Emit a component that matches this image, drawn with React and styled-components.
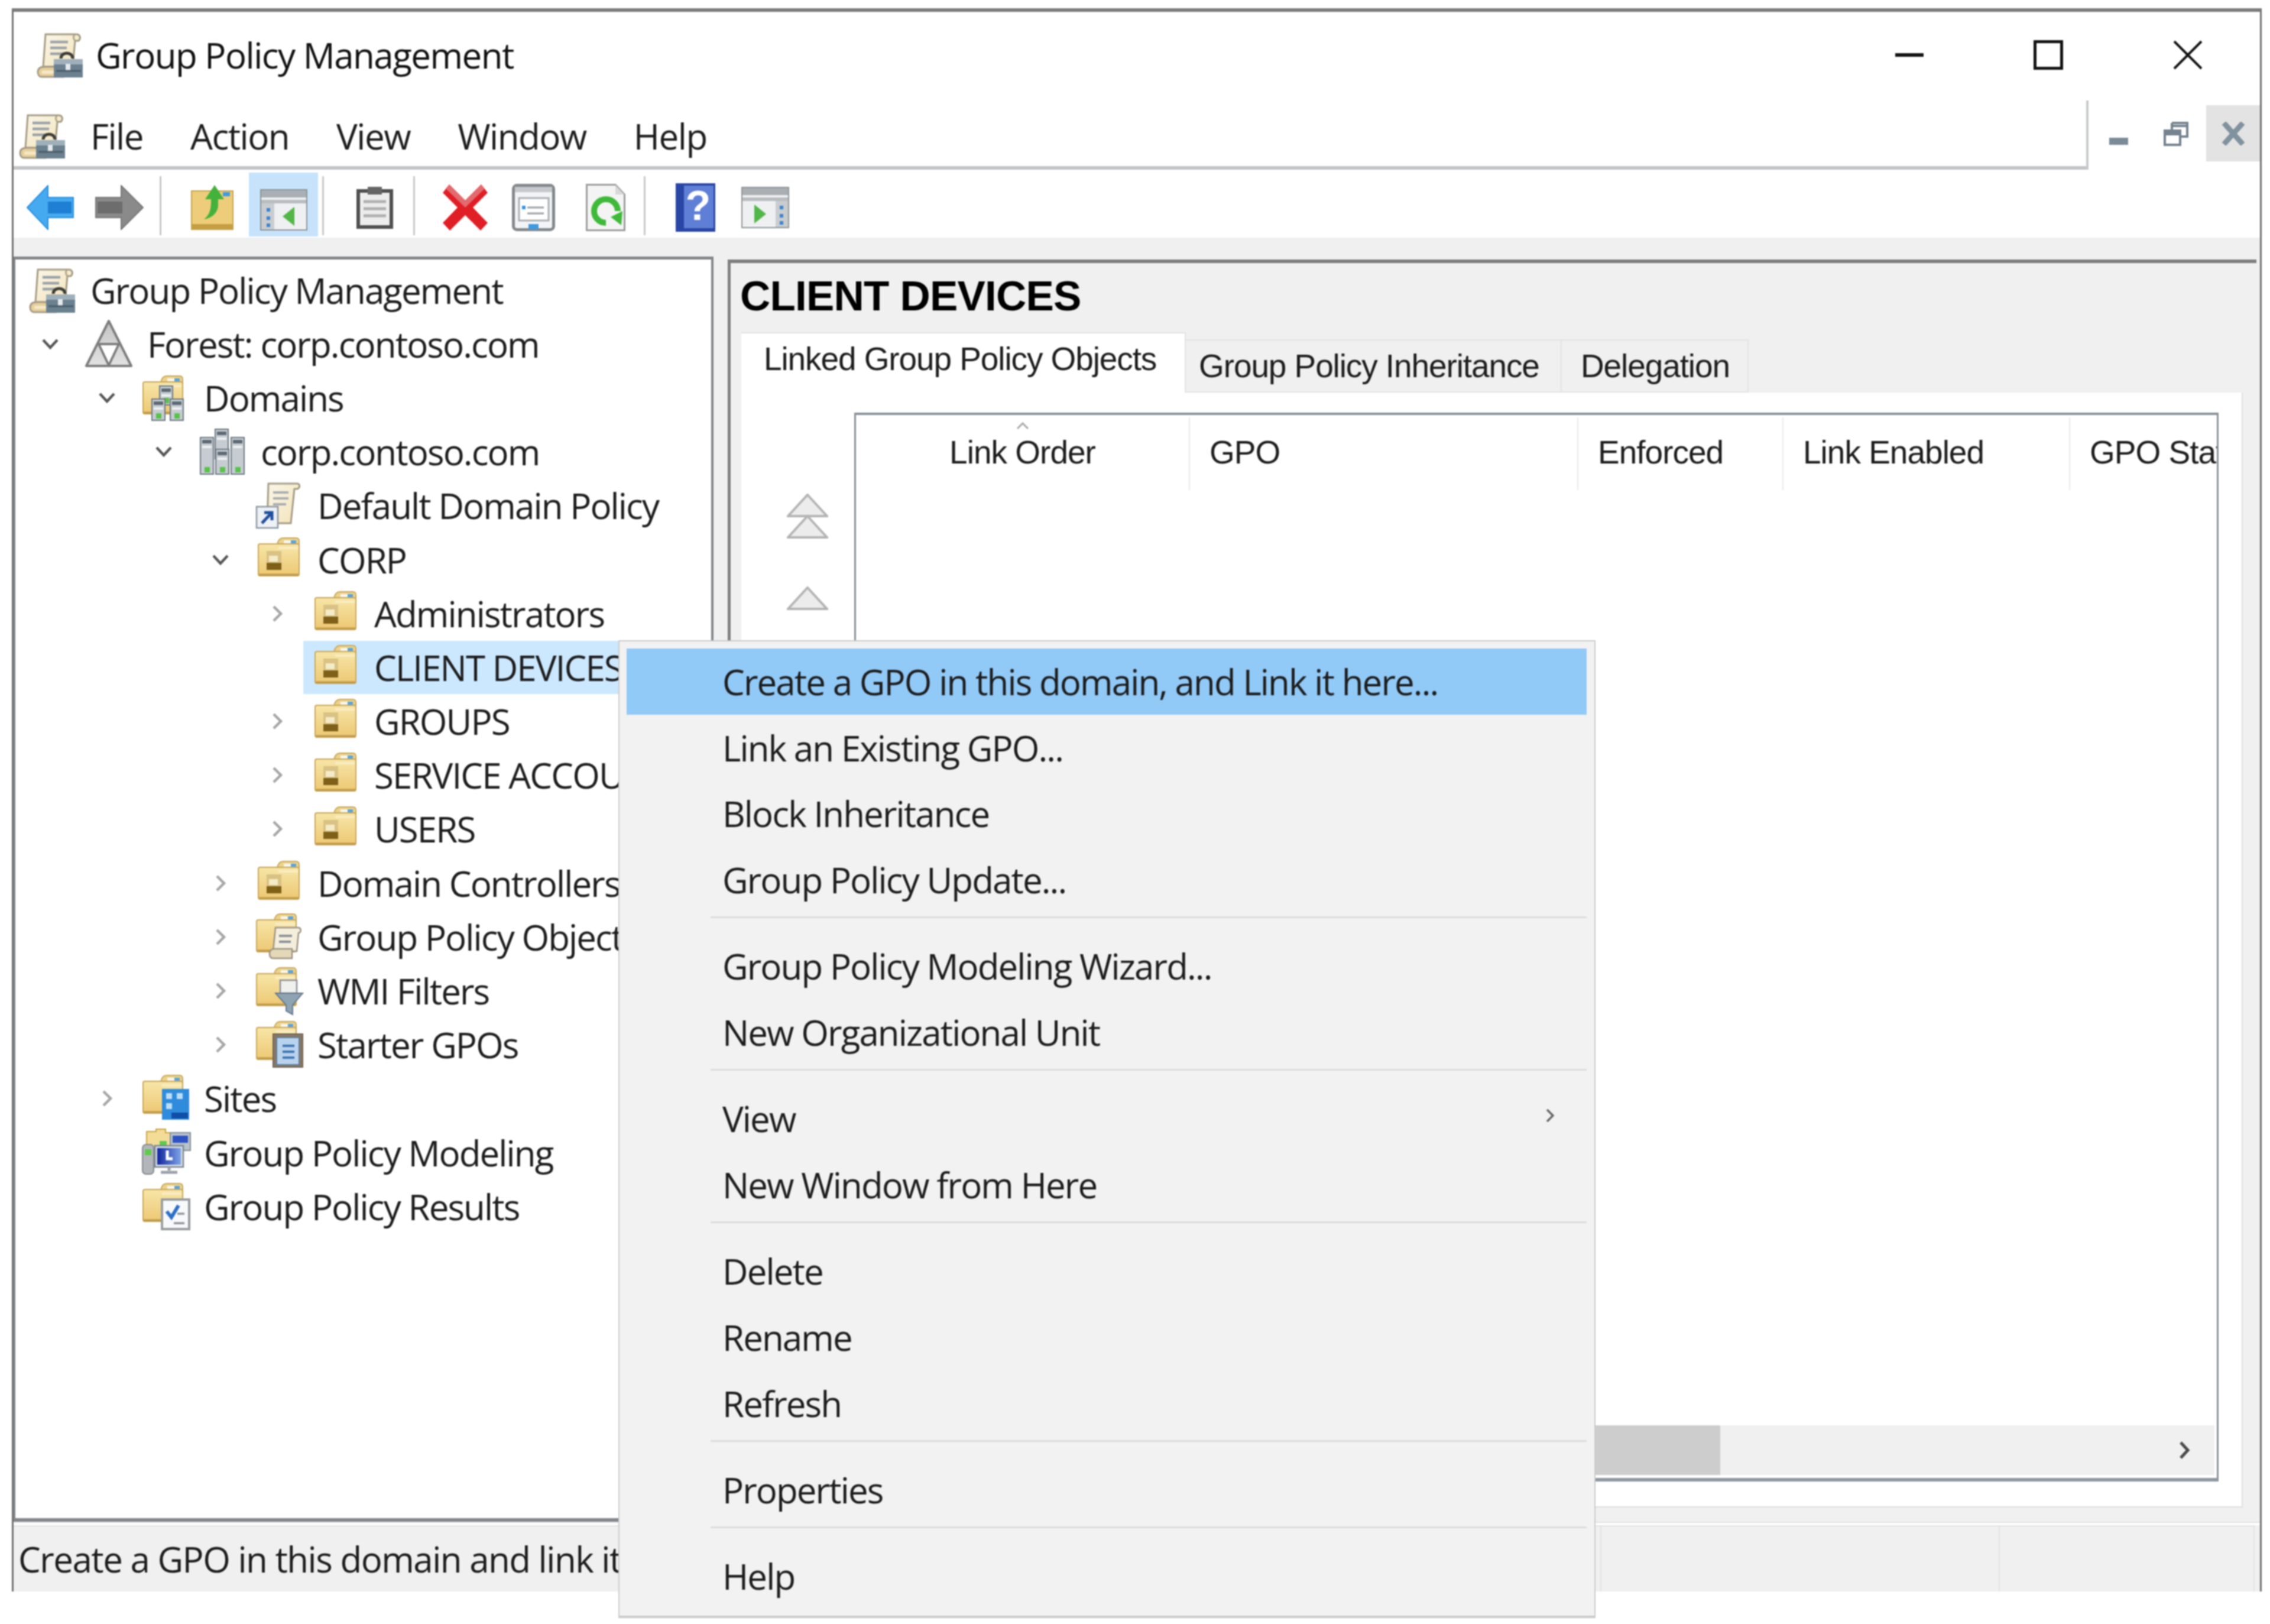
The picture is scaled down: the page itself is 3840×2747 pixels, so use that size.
import React from "react";
import styled, { createGlobalStyle } from "styled-components";

const GlobalStyle = createGlobalStyle`
  html, body {
    margin: 0;
    padding: 0;
    background: #fff;
  }
`;

const UI_FONT = `"Open Sans", "Noto Sans", sans-serif`;
const HEADER_FONT = `"Liberation Sans", Arial, sans-serif`;

const Page = styled.div`
  position: relative;
  width: 3840px;
  height: 2747px;
  overflow: hidden;
  background: #fff;
  padding: 14px 14px 0 20px;
  box-sizing: border-box;
  font-family: ${UI_FONT};
  color: #1c1c1c;
  filter: blur(0.9px);
`;

const SharedDefs = styled.svg`
  position: absolute;
  width: 0;
  height: 0;
`;

const Window = styled.div`
  width: 3806px;
  height: 2678px;
  box-sizing: border-box;
  border-top: 6px solid #7c7c7c;
  border-left: 3px solid #6f6f6f;
  border-right: 3px solid #6f6f6f;
  display: flex;
  flex-direction: column;
  background: #fff;
`;

const TitleBar = styled.div`
  height: 146px;
  flex: none;
  display: flex;
  align-items: center;
  padding-left: 38px;
`;

const TitleText = styled.div`
  margin-left: 21px;
  font-size: 60px;
  letter-spacing: -1.5px;
  white-space: nowrap;
  color: #111;
`;

const Caption = styled.div`
  margin-left: auto;
  display: flex;
  align-items: center;
  padding-right: 97px;
  gap: 186px;
`;

const MenuBar = styled.div`
  height: 121px;
  flex: none;
  box-sizing: border-box;
  display: flex;
  align-items: center;
  padding-left: 8px;
  padding-top: 13px;
  border-bottom: 6px solid #c2c4c6;
`;

const MenuItems = styled.div`
  display: flex;
  gap: 80px;
  margin-left: 42px;
  font-size: 60px;
  letter-spacing: -1.5px;
`;

const MdiGroup = styled.div`
  margin-left: auto;
  align-self: stretch;
  margin-top: -9px;
  margin-bottom: -6px;
  padding: 8px 0 14px 5px;
  border-left: 4px solid #c6c8ca;
  display: flex;
  gap: 6px;
  background: #fff;
`;

const MdiButton = styled.div`
  width: 91px;
  display: flex;
  align-items: center;
  justify-content: center;
  background: ${(p) => (p.$active ? "#e3e3e3" : "#fff")};
`;

const ToolBar = styled.div`
  height: 115px;
  flex: none;
  box-sizing: border-box;
  display: flex;
  align-items: center;
  padding-left: 22px;
  padding-top: 12px;
  background: #fff;
`;

const ToolIcon = styled.svg`
  flex: none;
  margin-left: ${(p) => p.$ml || 0}px;
`;

const ToolSep = styled.div`
  flex: none;
  width: 3px;
  height: 100px;
  margin-top: -6px;
  margin-left: ${(p) => p.$ml}px;
  background: #c9c9c9;
`;

const ToolToggle = styled.div`
  flex: none;
  align-self: flex-start;
  box-sizing: border-box;
  width: 117px;
  height: 108px;
  margin-top: -7px;
  margin-left: ${(p) => p.$ml}px;
  padding-top: 28px;
  background: #c6e3fb;
  display: flex;
  align-items: flex-start;
  justify-content: center;
`;

const Workspace = styled.div`
  flex: 1;
  min-height: 0;
  display: flex;
  gap: 24px;
  padding-top: 32px;
  background: #f0f0f0;
  padding-right: 6px;
  border-bottom: 2px solid #e2e2e2;
`;

const TreePane = styled.div`
  width: 1184px;
  flex: none;
  box-sizing: border-box;
  border-top: 5px solid #83878c;
  border-left: 3px solid #83878c;
  border-right: 4px solid #83878c;
  border-bottom: 6px solid #83878c;
  background: #fff;
  padding-top: 6px;
  overflow: hidden;
`;

const TreeRow = styled.div`
  height: 91.2px;
  display: flex;
  align-items: center;
  padding-left: ${(p) => (p.$level === 0 ? 22 : 22 + 96 * (p.$level - 1))}px;
  white-space: nowrap;
`;

const TreeChevron = styled.div`
  width: 96px;
  flex: none;
  box-sizing: border-box;
  padding-left: 22px;
  display: flex;
  align-items: center;
`;

const TreeNode = styled.div`
  flex: 1;
  display: flex;
  align-items: center;
  height: 90px;
  margin-left: -15px;
  padding-left: 15px;
  background: ${(p) => (p.$selected ? "#cce8ff" : "transparent")};
`;

const TreeIcon = styled.div`
  width: 105px;
  flex: none;
  display: flex;
  align-items: center;
`;

const TreeText = styled.span`
  font-size: 60px;
  letter-spacing: -1.9px;
`;

const DetailPane = styled.div`
  flex: 1;
  min-width: 0;
  box-sizing: border-box;
  margin-top: 5px;
  border-top: 6px solid #7f7f7f;
  border-left: 5px solid #7f7f7f;
  display: flex;
  flex-direction: column;
  padding-left: 18px;
  padding-right: 23px;
  padding-bottom: 24px;
`;

const PaneTitle = styled.div`
  height: 117px;
  flex: none;
  box-sizing: border-box;
  padding-bottom: 6px;
  margin-left: -2px;
  font-family: ${HEADER_FONT};
  font-weight: 700;
  font-size: 71px;
  letter-spacing: -0.8px;
  color: #000;
  display: flex;
  align-items: center;
`;

const TabRow = styled.div`
  display: flex;
  align-items: flex-end;
  flex: none;
  font-family: ${HEADER_FONT};
  font-size: 55px;
  height: 102px;
`;

const Tab = styled.div`
  box-sizing: border-box;
  width: ${(p) => p.$w}px;
  height: ${(p) => (p.$active ? 102 : 90)}px;
  display: flex;
  align-items: center;
  padding-left: ${(p) => p.$pad}px;
  padding-bottom: ${(p) => (p.$active ? 14 : 0)}px;
  background: ${(p) => (p.$active ? "#fff" : "#f0f0f0")};
  border-top: 2px solid #e2e2e2;
  border-right: 2px solid #e2e2e2;
  border-bottom: ${(p) => (p.$active ? "none" : "2px solid #e2e2e2")};
  white-space: nowrap;
  letter-spacing: -1.1px;
`;

const TabPanel = styled.div`
  flex: 1;
  min-height: 0;
  display: flex;
  background: #fff;
  border-right: 2px solid #dedede;
  border-bottom: 2px solid #dedede;
  padding: 34px 39px 42px 0;
`;

const MoveColumn = styled.div`
  width: 191px;
  flex: none;
  box-sizing: border-box;
  padding-top: 137px;
  padding-left: 77px;
  display: flex;
  flex-direction: column;
  gap: 81px;
`;

const ListBox = styled.div`
  flex: 1;
  min-width: 0;
  position: relative;
  box-sizing: border-box;
  border-top: 4px solid #8b929b;
  border-left: 3px solid #8b929b;
  border-right: 3px solid #8b929b;
  border-bottom: 6px solid #9098a1;
  display: flex;
  flex-direction: column;
  overflow: hidden;
`;

const HeaderRow = styled.div`
  display: flex;
  flex: none;
  margin-top: 4px;
  height: 123px;
  font-family: ${HEADER_FONT};
  font-size: 55px;
  letter-spacing: -1px;
`;

const HeaderCell = styled.div`
  box-sizing: border-box;
  flex: ${(p) => (p.$w ? `0 0 ${p.$w}px` : "1")};
  min-width: 0;
  overflow: hidden;
  white-space: nowrap;
  display: flex;
  align-items: center;
  justify-content: ${(p) => (p.$center ? "center" : "flex-start")};
  padding-left: ${(p) => (p.$center ? 0 : 33)}px;
  padding-bottom: 6px;
  border-right: ${(p) => (p.$w ? "2px solid #e8e8e8" : "none")};
`;

const SortCaret = styled.svg`
  position: absolute;
  left: 270px;
  top: 10px;
`;

const ListBody = styled.div`
  flex: 1;
`;

const ScrollBar = styled.div`
  height: 84px;
  flex: none;
  margin-bottom: 5px;
  margin-right: 4px;
  background: #f0f0f0;
  display: flex;
  align-items: center;
  padding-left: 952px;
  padding-right: 37px;
`;

const ScrollThumb = styled.div`
  width: 510px;
  height: 84px;
  background: #cdcdcd;
`;

const ScrollArrow = styled.svg`
  margin-left: auto;
`;

const StatusBar = styled.div`
  height: 116px;
  flex: none;
  display: flex;
  background: #f0f0f0;
  border-top: 4px solid #fff;
  box-sizing: border-box;
`;

const StatusCell = styled.div`
  width: ${(p) => p.$w}px;
  flex: none;
  box-sizing: border-box;
  padding-left: 8px;
  display: flex;
  align-items: center;
  white-space: nowrap;
  overflow: hidden;
  font-size: 60px;
  letter-spacing: -1.5px;
  border-right: 2px solid #e2e2e2;
  border-top: 2px solid #e2e2e2;
`;

const ContextMenu = styled.div`
  position: absolute;
  left: 1046px;
  top: 1083px;
  width: 1653px;
  height: 1654px;
  box-sizing: border-box;
  padding: 12px 13px 12px 12px;
  background: #f2f2f2;
  border: 2px solid #cacaca;
  border-bottom-width: 4px;
  display: flex;
  flex-direction: column;
`;

const ContextItem = styled.div`
  height: 111.8px;
  flex: none;
  box-sizing: border-box;
  padding-left: 162px;
  padding-right: 52px;
  display: flex;
  align-items: center;
  justify-content: space-between;
  font-size: 60px;
  letter-spacing: -1.9px;
  white-space: nowrap;
  background: ${(p) => (p.$active ? "#91c9f7" : "transparent")};
`;

const ContextArrow = styled.svg`
  margin-bottom: 10px;
`;

const ContextSep = styled.div`
  height: 34.4px;
  flex: none;
  box-sizing: border-box;
  margin-left: 142px;
  padding-top: 6px;
  &::before {
    content: "";
    display: block;
    height: 3px;
    background: #dcdcdc;
  }
`;

// ---- icons ----

const Paper = () => (
  <>
    <path d="M16 5H68C75 5 76 12 72 16H66L62 60H12Z" fill="url(#paperFill)" stroke="#a59c86" strokeWidth="3" />
    <path d="M66 16C62 12 62 8 66 5" fill="#e0cfa3" stroke="#a59c86" strokeWidth="2" />
    <path d="M24 18H54M24 28H52M24 38H48" stroke="#9ba3aa" strokeWidth="4.5" />
    <path d="M3 69C3 62 8 60 14 60H46V77H10C6 77 3 74 3 69Z" fill="#e8d09c" stroke="#a59c86" strokeWidth="3" />
    <path d="M10 69H34" stroke="#f6e9c9" strokeWidth="5" />
  </>
);

const Toolbox = () => (
  <>
    <path d="M42 46C42 34 62 34 62 46" fill="none" stroke="#3e3e38" strokeWidth="5" />
    <rect x="30" y="47" width="49" height="31" fill="#6b818f" />
    <rect x="30" y="47" width="49" height="9" fill="#9fb0bb" />
    <rect x="50" y="55" width="8" height="12" fill="#e6eaec" />
    <path d="M34 67H76" stroke="#4a5c68" strokeWidth="3" />
  </>
);

const GpmIcon = () => (
  <svg width="80" height="80" viewBox="0 0 80 80">
    <Paper />
    <Toolbox />
  </svg>
);

const ForestIcon = () => (
  <svg width="80" height="84" viewBox="0 0 80 84">
    <path d="M40 3L78 79H2Z" fill="url(#forestFill)" stroke="#7d7d7d" strokeWidth="4" strokeLinejoin="round" />
    <path d="M23 42H57L40 78Z" fill="#fff" stroke="#7d7d7d" strokeWidth="4" strokeLinejoin="round" />
  </svg>
);

const FolderBody = ({ w = 70 }) => (
  <>
    <path d={`M${w - 38} 14Q${w - 36} 3 ${w - 28} 3H${w - 6}Q${w - 1} 3 ${w - 1} 9V22H${w - 38}Z`} fill="#ecd28b" stroke="#c8a95c" strokeWidth="2" />
    <rect x={w - 27} y="7" width="12" height="5" fill="#f8f7ee" />
    <rect x={w - 15} y="7" width="9" height="5" fill="#55a4e2" />
    <rect x="2" y="13" width={w - 3} height="54" rx="3" fill="url(#folderFill)" stroke="#c8a65a" strokeWidth="2" />
    <path d={`M${w - 36} 20H${w - 3}`} stroke="#f9ecbf" strokeWidth="4" />
    <path d={`M3 65H${w - 2}`} stroke="#c09a48" strokeWidth="3" />
  </>
);

const OuIcon = () => (
  <svg width="80" height="80" viewBox="0 0 80 80">
    <g transform="translate(3 0)">
      <FolderBody w={72} />
      <rect x="16" y="25" width="25" height="32" fill="#d9c284" />
      <rect x="20" y="33" width="15" height="10" fill="#f4ecc8" />
      <rect x="16" y="45" width="25" height="12" fill="#7f6018" />
    </g>
  </svg>
);

const Server = ({ x, y, h = 42 }) => (
  <g transform={`translate(${x} ${y})`}>
    <rect width="22" height={h} fill="#c6ccd1" stroke="#6d7882" strokeWidth="2" />
    <rect x="3" y="4" width="16" height="6" fill="#5d6a75" />
    <rect x="3" y="14" width="16" height="4" fill="#eef0f2" />
    <rect x="7" y={h - 12} width="9" height="9" fill="#58c24a" />
  </g>
);

const ServersIcon = () => (
  <svg width="80" height="80" viewBox="0 0 80 80">
    <Server x="28" y="2" h="50" />
    <Server x="3" y="16" h="62" />
    <Server x="55" y="16" h="62" />
    <Server x="29" y="36" h="42" />
  </svg>
);

const DomainsIcon = () => (
  <svg width="84" height="80" viewBox="0 0 84 80">
    <FolderBody w={70} />
    <Server x="30" y="20" h="32" />
    <Server x="17" y="42" h="36" />
    <Server x="48" y="42" h="36" />
  </svg>
);

const LinkIcon = () => (
  <svg width="80" height="80" viewBox="0 0 80 80">
    <path d="M22 3H70C76 3 76 10 71 12H66L60 70H20Z" fill="url(#paperFill)" stroke="#a59c86" strokeWidth="3" />
    <path d="M30 18H56M30 28H56M30 38H52" stroke="#a9aeb3" strokeWidth="4" />
    <rect x="2" y="42" width="36" height="36" fill="#eef1f5" stroke="#8d97a2" strokeWidth="2.5" />
    <path d="M11 70L26 54M15 52H28V65" fill="none" stroke="#1f4f9c" strokeWidth="5" />
  </svg>
);

const GpoFolderIcon = () => (
  <svg width="84" height="84" viewBox="0 0 84 84">
    <FolderBody w={70} />
    <path d="M34 26H72C78 26 78 34 73 35L70 66H30Z" fill="#f4eedd" stroke="#9c9482" strokeWidth="2.5" />
    <path d="M40 40H62M40 50H60" stroke="#8b9298" strokeWidth="4" />
    <path d="M24 70C24 64 28 62 32 62H62V78H30C26 78 24 75 24 70Z" fill="#e5d8b8" stroke="#9c9482" strokeWidth="2.5" />
  </svg>
);

const WmiIcon = () => (
  <svg width="84" height="84" viewBox="0 0 84 84">
    <FolderBody w={70} />
    <rect x="42" y="24" width="28" height="22" fill="#f0f0ee" stroke="#8e9499" strokeWidth="2.5" />
    <path d="M34 46H80L63 66V82L52 76V66Z" fill="#8fa4b3" stroke="#66798a" strokeWidth="2" />
  </svg>
);

const StarterIcon = () => (
  <svg width="84" height="84" viewBox="0 0 84 84">
    <FolderBody w={70} />
    <rect x="30" y="24" width="50" height="56" fill="#8a7762" stroke="#6d6458" strokeWidth="2" />
    <rect x="36" y="30" width="38" height="46" fill="#b9d3ec" stroke="#5c7ea1" strokeWidth="2" />
    <path d="M46 44H66M46 54H66M46 64H66" stroke="#3f78b8" strokeWidth="4" />
  </svg>
);

const SitesIcon = () => (
  <svg width="84" height="84" viewBox="0 0 84 84">
    <FolderBody w={70} />
    <rect x="34" y="26" width="46" height="52" fill="#2f8bdb" />
    <path d="M41 33H51V43H41ZM59 33H69V43H59ZM41 50H51V60H41Z" fill="#bcdcf7" />
    <rect x="50" y="66" width="28" height="10" fill="#0f4fa8" />
  </svg>
);

const ModelingIcon = () => (
  <svg width="84" height="84" viewBox="0 0 84 84">
    <path d="M8 6H24V2H40V8H48V34H8Z" fill="#f3dc97" stroke="#c9a545" strokeWidth="2" />
    <rect x="30" y="22" width="12" height="10" fill="#5ecb4c" />
    <rect x="48" y="8" width="34" height="30" fill="#b8c3cc" stroke="#868f96" strokeWidth="2" />
    <rect x="52" y="13" width="26" height="12" fill="#2e52c4" />
    <rect x="1" y="28" width="19" height="50" rx="6" fill="#b2b6ba" stroke="#85898d" strokeWidth="2" />
    <rect x="5" y="36" width="11" height="10" fill="#5ecb4c" />
    <rect x="22" y="30" width="48" height="36" fill="#d6dde5" stroke="#7a8791" strokeWidth="2.5" />
    <rect x="26" y="34" width="40" height="28" fill="url(#monitorFill)" />
    <path d="M43 38V52H52" stroke="#fff" strokeWidth="5" fill="none" />
    <path d="M46 66V72M32 75H60" stroke="#9aa2a9" strokeWidth="5" />
  </svg>
);

const ResultsIcon = () => (
  <svg width="84" height="84" viewBox="0 0 84 84">
    <FolderBody w={70} />
    <rect x="34" y="30" width="46" height="50" fill="#f8f9fa" stroke="#999d9f" strokeWidth="4" />
    <path d="M42 50L50 60L62 40" fill="none" stroke="#2e6fc6" strokeWidth="6" />
    <path d="M54 70H72M60 54H72" stroke="#8f959a" strokeWidth="3.5" />
  </svg>
);

const ChevronDown = () => (
  <svg width="30" height="24" viewBox="0 0 30 24">
    <path d="M3 5L15 18L27 5" fill="none" stroke="#555" strokeWidth="4.5" />
  </svg>
);

const ChevronRight = () => (
  <svg width="30" height="30" viewBox="0 0 30 30">
    <path d="M9 3L21 15L9 27" fill="none" stroke="#a6a6a6" strokeWidth="4.5" />
  </svg>
);

const MoveTriangle = () => (
  <path d="M35 2L68 38H2Z" fill="#ececec" stroke="#b4b4b4" strokeWidth="4" />
);

const App = () => {
  const tree = [
    { level: 0, icon: GpmIcon, text: "Group Policy Management" },
    { level: 1, open: true, icon: ForestIcon, text: "Forest: corp.contoso.com" },
    { level: 2, open: true, icon: DomainsIcon, text: "Domains" },
    { level: 3, open: true, icon: ServersIcon, text: "corp.contoso.com" },
    { level: 4, leaf: true, icon: LinkIcon, text: "Default Domain Policy" },
    { level: 4, open: true, icon: OuIcon, text: "CORP" },
    { level: 5, icon: OuIcon, text: "Administrators" },
    { level: 5, leaf: true, selected: true, icon: OuIcon, text: "CLIENT DEVICES" },
    { level: 5, icon: OuIcon, text: "GROUPS" },
    { level: 5, icon: OuIcon, text: "SERVICE ACCOUNTS" },
    { level: 5, icon: OuIcon, text: "USERS" },
    { level: 4, icon: OuIcon, text: "Domain Controllers" },
    { level: 4, icon: GpoFolderIcon, text: "Group Policy Objects" },
    { level: 4, icon: WmiIcon, text: "WMI Filters" },
    { level: 4, icon: StarterIcon, text: "Starter GPOs" },
    { level: 2, icon: SitesIcon, text: "Sites" },
    { level: 2, leaf: true, icon: ModelingIcon, text: "Group Policy Modeling" },
    { level: 2, leaf: true, icon: ResultsIcon, text: "Group Policy Results" },
  ];

  const contextGroups = [
    ["Create a GPO in this domain, and Link it here...", "Link an Existing GPO...", "Block Inheritance", "Group Policy Update..."],
    ["Group Policy Modeling Wizard...", "New Organizational Unit"],
    ["View", "New Window from Here"],
    ["Delete", "Rename", "Refresh"],
    ["Properties"],
    ["Help"],
  ];

  return (
    <Page>
      <GlobalStyle />
      <SharedDefs>
        <defs>
          <linearGradient id="folderFill" x1="0" y1="0" x2="0" y2="1">
            <stop offset="0" stopColor="#f7e6a8" />
            <stop offset="1" stopColor="#edc873" />
          </linearGradient>
          <linearGradient id="paperFill" x1="0" y1="0" x2="1" y2="1">
            <stop offset="0" stopColor="#faf5e8" />
            <stop offset="1" stopColor="#f3e4b8" />
          </linearGradient>
          <linearGradient id="forestFill" x1="0" y1="0" x2="0" y2="1">
            <stop offset="0" stopColor="#c4c4c4" />
            <stop offset="1" stopColor="#e2e2e2" />
          </linearGradient>
          <linearGradient id="monitorFill" x1="0" y1="0" x2="1" y2="0">
            <stop offset="0" stopColor="#10249c" />
            <stop offset="1" stopColor="#7fa4e8" />
          </linearGradient>
        </defs>
      </SharedDefs>
      <Window>
        <TitleBar>
          <GpmIcon />
          <TitleText>Group Policy Management</TitleText>
          <Caption>
            <svg width="48" height="8" viewBox="0 0 48 8"><rect width="48" height="6" y="1" fill="#111" /></svg>
            <svg width="50" height="50" viewBox="0 0 50 50"><rect x="2.5" y="2.5" width="45" height="45" fill="none" stroke="#111" strokeWidth="5" /></svg>
            <svg width="50" height="50" viewBox="0 0 50 50"><path d="M2 2L48 48M48 2L2 48" stroke="#111" strokeWidth="4" /></svg>
          </Caption>
        </TitleBar>
        <MenuBar>
          <GpmIcon />
          <MenuItems>
            <span>File</span>
            <span>Action</span>
            <span>View</span>
            <span>Window</span>
            <span>Help</span>
          </MenuItems>
          <MdiGroup>
            <MdiButton>
              <svg width="32" height="40" viewBox="0 0 32 40"><rect y="27" width="32" height="12" fill="#7a8a96" /></svg>
            </MdiButton>
            <MdiButton>
              <svg width="42" height="42" viewBox="0 0 42 42">
                <path d="M14 3H40V26H30M14 3V14M14 8H40" fill="none" stroke="#74838f" strokeWidth="4" />
                <rect x="2" y="16" width="26" height="24" fill="none" stroke="#74838f" strokeWidth="4" />
                <rect x="2" y="16" width="26" height="8" fill="#74838f" />
              </svg>
            </MdiButton>
            <MdiButton $active>
              <svg width="40" height="40" viewBox="0 0 40 40"><path d="M4 2L36 38M36 2L4 38" stroke="#7f929e" strokeWidth="9" /></svg>
            </MdiButton>
          </MdiGroup>
        </MenuBar>
        <ToolBar>
          <ToolIcon width="80" height="76" viewBox="0 0 80 76">
            <path d="M1 38L36 1V21H79V55H36V75Z" fill="#45aaf0" stroke="#2b8fdc" strokeWidth="2" />
            <rect x="36" y="28" width="40" height="20" fill="#1f7fd4" />
          </ToolIcon>
          <ToolIcon $ml={36} width="82" height="76" viewBox="0 0 82 76">
            <path d="M81 38L44 1V21H1V55H44V75Z" fill="#8a8a8a" stroke="#777" strokeWidth="2" />
            <rect x="4" y="28" width="42" height="20" fill="#6d6d6d" />
          </ToolIcon>
          <ToolSep $ml={27} />
          <ToolIcon $ml={50} width="72" height="76" viewBox="0 0 72 76">
            <path d="M1 10H71V75H1Z" fill="#eecd7a" stroke="#c4a24e" strokeWidth="2" />
            <rect x="2" y="66" width="68" height="8" fill="#c59f42" />
            <path d="M40 0L56 24H46V34C46 46 36 56 22 58C32 50 34 42 34 24H24Z" fill="#44b13c" />
            <rect x="54" y="12" width="12" height="7" fill="#3f9be0" />
          </ToolIcon>
          <ToolToggle $ml={26}>
            <svg width="80" height="70" viewBox="0 0 80 70">
              <rect x="1" y="1" width="78" height="68" fill="#eef0f1" stroke="#8e9498" strokeWidth="2" />
              <rect x="2" y="2" width="76" height="12" fill="#a9afb3" />
              <rect x="2" y="18" width="76" height="6" fill="#b9bdc0" />
              <rect x="2" y="24" width="22" height="44" fill="#c9cdd0" />
              <path d="M11 32h6v6h-6zM11 46h6v6h-6zM11 58h6v6h-6z" fill="#3f82cf" />
              <path d="M58 30V62L38 46Z" fill="#53b648" />
            </svg>
          </ToolToggle>
          <ToolSep $ml={7} />
          <ToolIcon $ml={55} width="62" height="72" viewBox="0 0 62 72">
            <rect x="3" y="8" width="56" height="61" fill="#ededed" stroke="#4f4f4f" strokeWidth="6" />
            <rect x="19" y="1" width="24" height="13" fill="#666" />
            <path d="M12 26H50M12 38H50M12 50H50" stroke="#b0b0b0" strokeWidth="5" />
          </ToolIcon>
          <ToolSep $ml={34} />
          <ToolIcon $ml={46} width="78" height="80" viewBox="0 0 78 80">
            <path d="M12 1L39 28L66 1L77 15L52 40L77 66L65 79L39 53L13 79L1 66L26 40L1 15Z" fill="#e01e25" />
            <path d="M12 1L39 28L66 1L72 8L39 40L6 8Z" fill="#e36a6e" />
          </ToolIcon>
          <ToolIcon $ml={40} width="73" height="80" viewBox="0 0 73 80">
            <rect x="2.5" y="2.5" width="68" height="75" rx="6" fill="#f2f4f5" stroke="#83888c" strokeWidth="5" />
            <rect x="5" y="5" width="63" height="9" fill="#c5c9cc" />
            <rect x="12" y="24" width="50" height="38" fill="#fff" stroke="#a9aeb2" strokeWidth="3" />
            <path d="M26 40H54M26 50H54" stroke="#9a9fa3" strokeWidth="3" />
            <rect x="17" y="37" width="6" height="6" fill="#2f96e8" />
            <rect x="28" y="68" width="17" height="9" fill="#3f9be0" />
          </ToolIcon>
          <ToolIcon $ml={52} width="67" height="80" viewBox="0 0 67 80">
            <path d="M1.5 1.5H50L65.5 18V78.5H1.5Z" fill="#f4f4f4" stroke="#9c9c9c" strokeWidth="3" />
            <path d="M50 2V18H65" fill="#d8d8d8" />
            <path d="M54 46A20 20 0 1 0 34 66" fill="none" stroke="#3fb93a" strokeWidth="10" />
            <path d="M42 56L62 46L60 70Z" fill="#3fb93a" />
          </ToolIcon>
          <ToolSep $ml={31} />
          <ToolIcon $ml={51} width="67" height="82" viewBox="0 0 67 82">
            <rect width="67" height="82" fill="#2a46a4" />
            <rect x="14" y="4" width="50" height="72" fill="#5f7fd6" />
            <text x="38" y="62" textAnchor="middle" fontFamily="Liberation Sans, sans-serif" fontWeight="700" fontSize="70" fill="#fff">?</text>
          </ToolIcon>
          <ToolIcon $ml={44} width="81" height="70" viewBox="0 0 81 70">
            <rect x="1" y="1" width="79" height="68" fill="#eef0f1" stroke="#8e9498" strokeWidth="2" />
            <rect x="2" y="2" width="77" height="12" fill="#a9afb3" />
            <rect x="2" y="18" width="77" height="6" fill="#b9bdc0" />
            <rect x="58" y="24" width="21" height="44" fill="#c9cdd0" />
            <path d="M65 32h6v6h-6zM65 46h6v6h-6zM65 58h6v6h-6z" fill="#3f82cf" />
            <path d="M22 30V62L42 46Z" fill="#53b648" />
          </ToolIcon>
        </ToolBar>
        <Workspace>
          <TreePane>
            {tree.map((n) => {
              const Icon = n.icon;
              return (
                <TreeRow key={n.text} $level={n.level}>
                  {n.level > 0 && (
                    <TreeChevron>{n.leaf ? null : n.open ? <ChevronDown /> : <ChevronRight />}</TreeChevron>
                  )}
                  <TreeNode $selected={n.selected}>
                    <TreeIcon><Icon /></TreeIcon>
                    <TreeText>{n.text}</TreeText>
                  </TreeNode>
                </TreeRow>
              );
            })}
          </TreePane>
          <DetailPane>
            <PaneTitle>CLIENT DEVICES</PaneTitle>
            <TabRow>
              <Tab $active $w={752} $pad={38}>Linked Group Policy Objects</Tab>
              <Tab $w={636} $pad={22}>Group Policy Inheritance</Tab>
              <Tab $w={316} $pad={32}>Delegation</Tab>
            </TabRow>
            <TabPanel>
              <MoveColumn>
                <svg width="70" height="76" viewBox="0 0 70 76">
                  <MoveTriangle />
                  <g transform="translate(0 36)"><MoveTriangle /></g>
                </svg>
                <svg width="70" height="42" viewBox="0 0 70 42"><MoveTriangle /></svg>
              </MoveColumn>
              <ListBox>
                <SortCaret width="24" height="16" viewBox="0 0 24 16">
                  <path d="M3 13L12 4L21 13" fill="none" stroke="#a8a8a8" strokeWidth="3" />
                </SortCaret>
                <HeaderRow>
                  <HeaderCell $w={565} $center>Link Order</HeaderCell>
                  <HeaderCell $w={657}>GPO</HeaderCell>
                  <HeaderCell $w={347}>Enforced</HeaderCell>
                  <HeaderCell $w={485}>Link Enabled</HeaderCell>
                  <HeaderCell>GPO Status</HeaderCell>
                </HeaderRow>
                <ListBody />
                <ScrollBar>
                  <ScrollThumb />
                  <ScrollArrow width="26" height="32" viewBox="0 0 26 32">
                    <path d="M6 3L18 16L6 29" fill="none" stroke="#4a4a4a" strokeWidth="5" />
                  </ScrollArrow>
                </ScrollBar>
              </ListBox>
            </TabPanel>
          </DetailPane>
        </Workspace>
        <StatusBar>
          <StatusCell $w={2686}>Create a GPO in this domain and link it here</StatusCell>
          <StatusCell $w={674} />
          <StatusCell $w={431} />
        </StatusBar>
      </Window>
      <ContextMenu>
        {contextGroups.map((group, g) => (
          <React.Fragment key={group[0]}>
            {g > 0 && <ContextSep />}
            {group.map((label) => (
              <ContextItem key={label} $active={label.startsWith("Create")}>
                <span>{label}</span>
                {label === "View" && (
                  <ContextArrow width="20" height="28" viewBox="0 0 20 28">
                    <path d="M5 4L15 14L5 24" fill="none" stroke="#666" strokeWidth="3.5" />
                  </ContextArrow>
                )}
              </ContextItem>
            ))}
          </React.Fragment>
        ))}
      </ContextMenu>
    </Page>
  );
};

export default App;
